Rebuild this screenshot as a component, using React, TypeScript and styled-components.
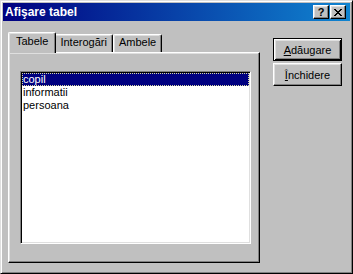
import React from "react";
import styled, { createGlobalStyle } from "styled-components";

const GlobalStyle = createGlobalStyle`
  html, body { margin: 0; padding: 0; background: #c0c0c0; }
  body { font-family: "Liberation Sans", Arial, sans-serif; }
`;

const Window = styled.div`
  box-sizing: border-box;
  width: 353px;
  height: 274px;
  background: #c0c0c0;
  border: 1px solid;
  border-color: #dfdfdf #000 #000 #dfdfdf;
  box-shadow: inset 1px 1px #fff, inset -1px -1px #808080;
  padding: 2px;
  display: flex;
  flex-direction: column;
`;

const TitleBar = styled.div`
  height: 18px;
  flex: none;
  display: flex;
  align-items: center;
  padding: 0 4px 0 2px;
  background: linear-gradient(to right, #000080, #1084d0);
  color: #fff;
  font: bold 12px "Liberation Sans", Arial, sans-serif;
`;

const TitleText = styled.span`
  flex: 1;
  white-space: nowrap;
`;

const TitleButtons = styled.div`
  display: flex;
  gap: 1px;
`;

const TitleButton = styled.div`
  box-sizing: border-box;
  width: 16px;
  height: 14px;
  background: #c0c0c0;
  color: #000;
  border: 1px solid;
  border-color: #fff #000 #000 #fff;
  box-shadow: inset -1px -1px #808080, inset 1px 1px #dfdfdf;
  display: flex;
  align-items: center;
  justify-content: center;
  font: bold 11px "Liberation Sans", Arial, sans-serif;
  line-height: 1;
`;

const Body = styled.div`
  display: flex;
  padding: 11px 0 0 5px;
`;

const TabControl = styled.div`
  display: flex;
  flex-direction: column;
`;

const TabStrip = styled.div`
  height: 20px;
  display: flex;
  align-items: flex-end;
  padding-left: 2px;
`;

const Tab = styled.div<{ $active?: boolean }>`
  box-sizing: border-box;
  position: relative;
  z-index: ${(p) => (p.$active ? 2 : 1)};
  height: ${(p) => (p.$active ? 21 : 18)}px;
  margin: ${(p) => (p.$active ? "0 -2px -1px" : "0")};
  padding: ${(p) => (p.$active ? "2px 7px 0" : "1px 5px 0")};
  background: #c0c0c0;
  border-top: 1px solid #fff;
  border-left: 1px solid #fff;
  border-right: 1px solid #000;
  border-radius: 2px 2px 0 0;
  box-shadow: inset -1px 0 #808080, inset 1px 1px #dfdfdf;
  font-size: 11px;
  line-height: 13px;
  color: #000;
  white-space: nowrap;
`;

const Panel = styled.div`
  box-sizing: border-box;
  width: 252px;
  height: 211px;
  border: 1px solid;
  border-color: #fff #000 #000 #fff;
  box-shadow: inset -1px -1px #808080, inset 1px 1px #dfdfdf;
  padding: 18px 0 0 11px;
`;

const ListBox = styled.div`
  box-sizing: border-box;
  width: 231px;
  height: 173px;
  background: #fff;
  border: 1px solid;
  border-color: #808080 #fff #fff #808080;
  box-shadow: inset 1px 1px #000, inset -1px -1px #dfdfdf;
  padding: 1px;
`;

const ListItem = styled.div<{ $selected?: boolean }>`
  height: 13px;
  line-height: 13px;
  padding-left: 1px;
  font-size: 11px;
  color: ${(p) => (p.$selected ? "#fff" : "#000")};
  background: ${(p) => (p.$selected ? "#000080" : "transparent")};
  outline: ${(p) => (p.$selected ? "1px dotted #d8d8a0" : "none")};
  outline-offset: -1px;
`;

const ButtonColumn = styled.div`
  display: flex;
  flex-direction: column;
  gap: 2px;
  margin-left: 13px;
  padding-top: 6px;
`;

const Button = styled.div<{ $default?: boolean }>`
  box-sizing: border-box;
  width: 69px;
  height: 23px;
  display: flex;
  align-items: center;
  justify-content: center;
  background: #c0c0c0;
  font-size: 11px;
  color: #000;
  border: 1px solid;
  border-color: ${(p) => (p.$default ? "#000" : "#fff #000 #000 #fff")};
  box-shadow: ${(p) =>
    p.$default
      ? "inset 1px 1px #fff, inset -1px -1px #000, inset 2px 2px #dfdfdf, inset -2px -2px #808080"
      : "inset -1px -1px #808080, inset 1px 1px #dfdfdf"};
`;

const CloseGlyph = () => (
  <svg width="8" height="7" viewBox="0 0 8 7" shapeRendering="crispEdges">
    <path
      d="M0 0h2v1h-2zM6 0h2v1h-2zM1 1h2v1h-2zM5 1h2v1h-2zM2 2h4v1h-4zM3 3h2v1h-2zM2 4h4v1h-4zM1 5h2v1h-2zM5 5h2v1h-2zM0 6h2v1h-2zM6 6h2v1h-2z"
      fill="#000"
    />
  </svg>
);

export default function App() {
  return (
    <>
      <GlobalStyle />
      <Window>
        <TitleBar>
          <TitleText>Afişare tabel</TitleText>
          <TitleButtons>
            <TitleButton>?</TitleButton>
            <TitleButton>
              <CloseGlyph />
            </TitleButton>
          </TitleButtons>
        </TitleBar>
        <Body>
          <TabControl>
            <TabStrip>
              <Tab $active>Tabele</Tab>
              <Tab>Interogări</Tab>
              <Tab>Ambele</Tab>
            </TabStrip>
            <Panel>
              <ListBox>
                <ListItem $selected>copil</ListItem>
                <ListItem>informatii</ListItem>
                <ListItem>persoana</ListItem>
              </ListBox>
            </Panel>
          </TabControl>
          <ButtonColumn>
            <Button $default>
              <span>
                <u>A</u>dăugare
              </span>
            </Button>
            <Button>
              <span>
                <u>Î</u>nchidere
              </span>
            </Button>
          </ButtonColumn>
        </Body>
      </Window>
    </>
  );
}
